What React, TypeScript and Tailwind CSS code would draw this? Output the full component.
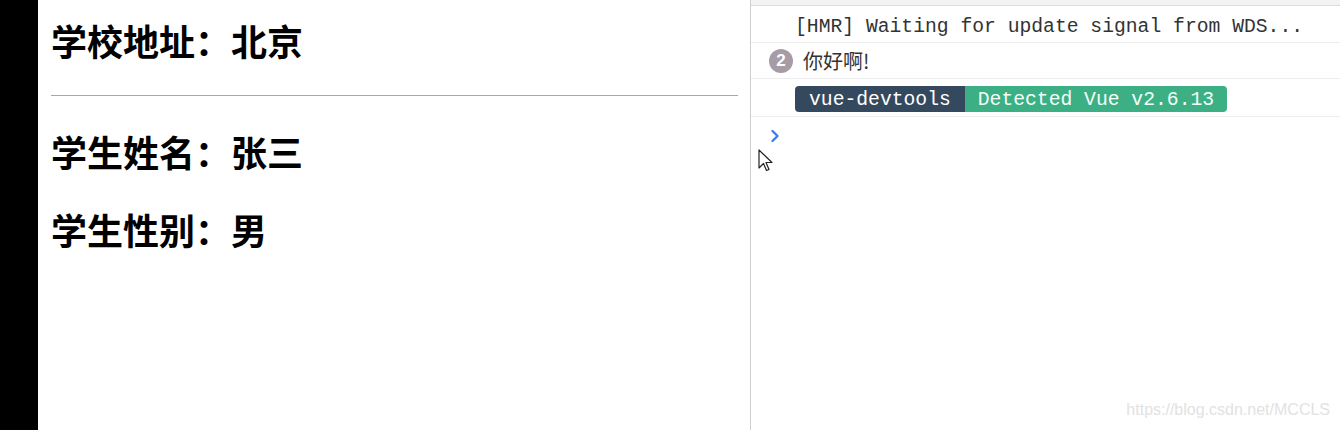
const cjk = "font-['Noto_Sans_CJK_SC',sans-serif]";
const mono = "font-['Liberation_Mono','Noto_Sans_CJK_SC',monospace]";

function ConsoleRow({ children, className = "" }: { children: React.ReactNode; className?: string }) {
  return <div className={`flex border-b border-[#ececec] ${className}`}>{children}</div>;
}

export default function App() {
  return (
    <div className="relative flex h-[430px] w-[1340px] overflow-hidden bg-white">
      {/* black gutter */}
      <div className="w-[38px] shrink-0 bg-black" />

      {/* page */}
      <div className={`flex w-[712px] shrink-0 flex-col pl-[13px] pr-[12px] text-black ${cjk}`}>
        <h1 className="mt-[22px] text-[36px] font-bold leading-[36px]">学校地址：北京</h1>
        <hr className="mt-[37px] border-t border-[#a8a8a8]" />
        <h2 className="mt-[37px] text-[36px] font-bold leading-[36px]">学生姓名：张三</h2>
        <h3 className="mt-[42px] text-[36px] font-bold leading-[36px]">学生性别：男</h3>
      </div>

      {/* console */}
      <div className="flex flex-1 flex-col border-l border-[#cfcfcf] text-[#333]">
        <div className="h-[6px] border-b border-[#dcdcdc] bg-[#f1f3f4]" />
        <ConsoleRow className="h-[37px] items-start pl-[44px] pt-[12px]">
          <span className={`${mono} text-[19.7px] leading-none`}>[HMR] Waiting for update signal from WDS...</span>
        </ConsoleRow>
        <ConsoleRow className="h-[36px] items-center pl-[18px]">
          <span className="mr-[10px] flex h-[24px] w-[24px] items-center justify-center rounded-full bg-[#a79ca5] font-['Liberation_Sans',sans-serif] text-[17px] font-bold text-white">
            2
          </span>
          <span className={`${cjk} text-[20px] leading-none text-[#333]`}>你好啊!</span>
        </ConsoleRow>
        <ConsoleRow className="h-[38px] items-start pl-[44px] pt-[7px]">
          <div className={`flex h-[26px] overflow-hidden rounded-[4px] ${mono} text-[19.7px] leading-none`}>
            <span className="flex items-center bg-[#35495e] px-[14px] pt-[4px] text-white">vue-devtools</span>
            <span className="flex items-center bg-[#3daf84] px-[13px] pt-[4px] text-[#f2fff8]">Detected Vue v2.6.13</span>
          </div>
        </ConsoleRow>
        <div className="pl-[19px] pt-[12px]">
          <svg width="10" height="14" viewBox="0 0 10 14" fill="none">
            <path d="M2.5 2 L7.5 7 L2.5 12" stroke="#3a7ff0" strokeWidth="2.4" strokeLinecap="round" strokeLinejoin="round" />
          </svg>
        </div>
      </div>

      {/* mouse cursor */}
      <svg className="absolute left-[758px] top-[149px]" width="16" height="24" viewBox="0 0 16 24">
        <path
          d="M1 1 L1 19 L5.5 14.5 L8.5 21.5 L11 20.5 L8 13.5 L14 13.5 Z"
          fill="#fff"
          stroke="#222"
          strokeWidth="1.2"
          strokeLinejoin="round"
        />
      </svg>

      {/* watermark */}
      <span className="absolute bottom-[8px] right-[10px] font-['Liberation_Sans',sans-serif] text-[16px] text-[#e2e2e2]">
        https://blog.csdn.net/MCCLS
      </span>
    </div>
  );
}
